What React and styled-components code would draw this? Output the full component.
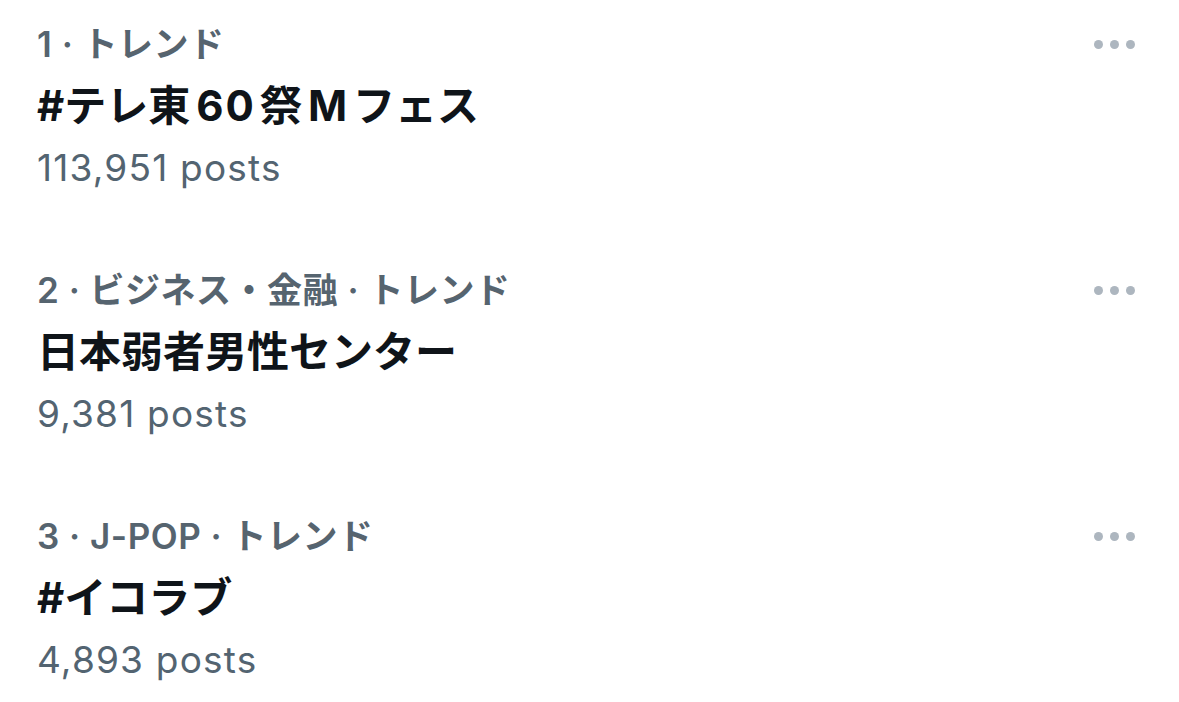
import React from "react";
import styled, { createGlobalStyle } from "styled-components";

const GlobalStyle = createGlobalStyle`
  html, body {
    margin: 0;
    padding: 0;
    background: #ffffff;
  }
  body {
    font-family: Inter, "Noto Sans CJK JP", sans-serif;
    -webkit-font-smoothing: antialiased;
  }
`;

// title split into runs so latin runs get the iOS-style spacing around them
const trends = [
  {
    rank: 1,
    context: "トレンド",
    title: [{ t: "#テレ東" }, { t: "60", latin: true }, { t: "祭" }, { t: "M", latin: true }, { t: "フェス" }],
    posts: "113,951",
  },
  {
    rank: 2,
    context: "ビジネス・金融 · トレンド",
    title: [{ t: "日本弱者男性センター" }],
    posts: "9,381",
  },
  {
    rank: 3,
    context: "J-POP · トレンド",
    title: [{ t: "#イコラブ" }],
    posts: "4,893",
  },
];

const List = styled.div`
  display: flex;
  flex-direction: column;
  gap: 60px;
  padding: 13px 0 0 37px;
  width: 1179px;
  box-sizing: border-box;
`;

const Item = styled.div`
  display: flex;
  justify-content: space-between;
  align-items: flex-start;
  padding-right: 44px;
`;

const Body = styled.div`
  display: flex;
  flex-direction: column;
`;

const Context = styled.div`
  font-size: 35px;
  line-height: 62px;
  font-weight: 600;
  letter-spacing: 0.5px;
  color: #56646f;
`;

const Title = styled.div`
  font-size: 42px;
  line-height: 62px;
  font-weight: 700;
  color: #0f1419;
`;

const Latin = styled.span`
  margin: 0 4px 0 6px;
  letter-spacing: 2px;
`;

const Count = styled.div`
  font-size: 37px;
  line-height: 62px;
  font-weight: 400;
  letter-spacing: 1.2px;
  color: #536471;
`;

const More = styled.div`
  display: flex;
  gap: 7px;
  height: 62px;
  align-items: center;
`;

const Dot = styled.span`
  width: 9px;
  height: 9px;
  border-radius: 50%;
  background: #adb6bf;
`;

function Trend({ rank, context, title, posts }) {
  return (
    <Item>
      <Body>
        <Context>
          {rank} · {context}
        </Context>
        <Title>
          {title.map((run, i) =>
            run.latin ? <Latin key={i}>{run.t}</Latin> : <span key={i}>{run.t}</span>
          )}
        </Title>
        <Count>{posts} posts</Count>
      </Body>
      <More>
        <Dot />
        <Dot />
        <Dot />
      </More>
    </Item>
  );
}

export default function App() {
  return (
    <>
      <GlobalStyle />
      <List>
        {trends.map((t) => (
          <Trend key={t.rank} {...t} />
        ))}
      </List>
    </>
  );
}
